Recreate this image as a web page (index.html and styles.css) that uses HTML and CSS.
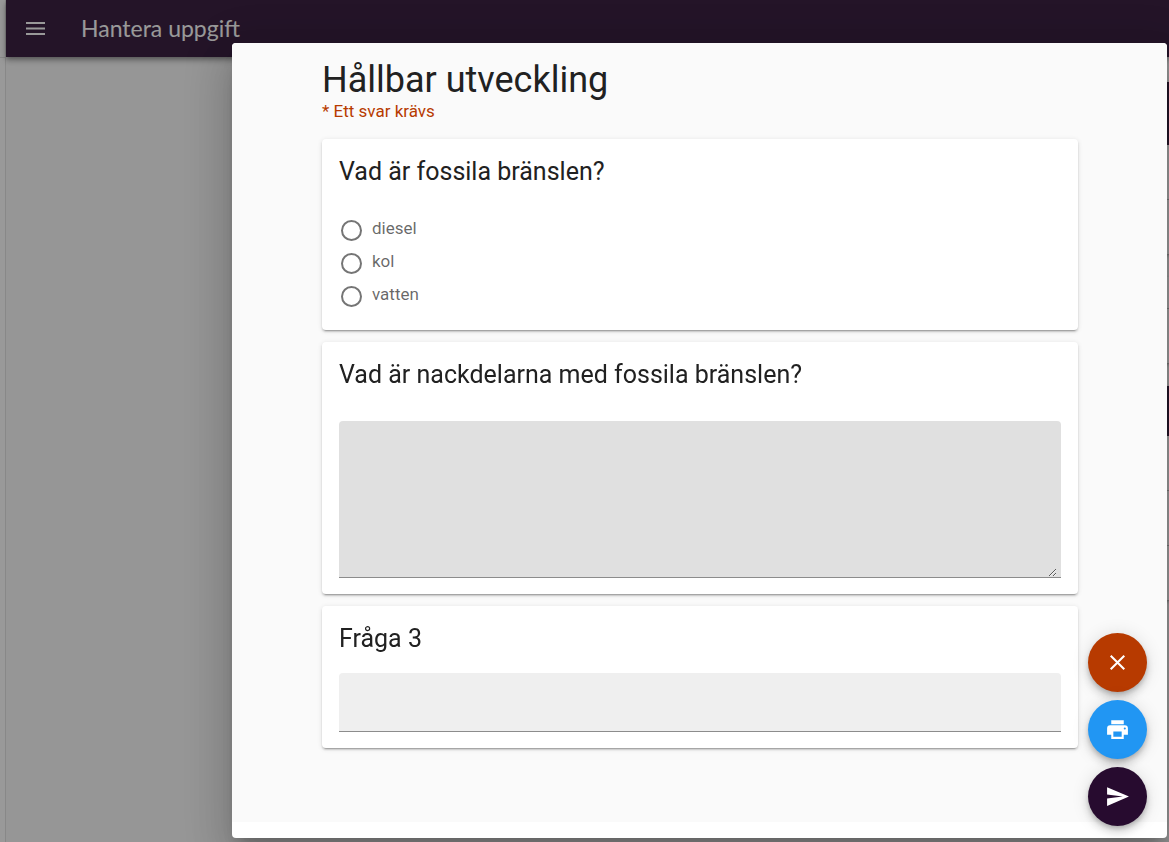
FILE: index.html
```html
<!DOCTYPE html>
<html lang="sv">
	<head>
		<meta charset="utf-8" />
		<title>Hantera uppgift</title>
		<meta name="viewport" content="width=device-width" />
		<link rel="stylesheet" href="styles.css">
	</head>
	<body>

		<div class="app">
			<div class="drawer">
				<div class="drawer-head"></div>
			</div>

			<div class="page">
				<header class="toolbar">
					<button class="menu" type="button" aria-label="Meny">
						<svg viewBox="0 0 20 14" width="20" height="14"><path d="M0 2h19M0 7.5h19M0 13h19" stroke="currentColor" stroke-width="2" /></svg>
					</button>
					<span class="toolbar-title">Hantera uppgift</span>
				</header>

				<main class="panels">
					<div class="panel">
						<div class="panel-head"></div>
						<div class="panel-row"></div>
						<div class="panel-row"></div>
					</div>
					<div class="panel">
						<div class="panel-row short"></div>
						<div class="panel-row"></div>
					</div>
					<div class="panel">
						<div class="panel-head low"></div>
						<div class="panel-row"></div>
						<div class="panel-row"></div>
						<div class="panel-row"></div>
					</div>
				</main>
			</div>
		</div>

		<div class="overlay">
			<div class="dialog" role="dialog" aria-labelledby="form-title">
				<form class="form">
					<h1 class="title" id="form-title">Hållbar utveckling</h1>
					<p class="required">* Ett svar krävs</p>

					<div class="questions">
						<section class="card" role="radiogroup" aria-labelledby="q1">
							<h2 class="question" id="q1">Vad är fossila bränslen?</h2>
							<div class="options">
								<div class="option">
									<input type="radio" name="fuel" id="diesel" />
									<label for="diesel">diesel</label>
								</div>
								<div class="option">
									<input type="radio" name="fuel" id="kol" />
									<label for="kol">kol</label>
								</div>
								<div class="option">
									<input type="radio" name="fuel" id="vatten" />
									<label for="vatten">vatten</label>
								</div>
							</div>
						</section>

						<section class="card">
							<h2 class="question"><label for="q2">Vad är nackdelarna med fossila bränslen?</label></h2>
							<div class="field field-area">
								<textarea id="q2"></textarea>
							</div>
						</section>

						<section class="card">
							<h2 class="question"><label for="q3">Fråga 3</label></h2>
							<div class="field field-line">
								<input type="text" id="q3" />
							</div>
						</section>
					</div>
				</form>
			</div>
		</div>

		<div class="fabs">
			<button class="fab close" type="button" aria-label="Stäng">
				<svg viewBox="0 0 24 24" width="25" height="25"><path d="M5.5 5.5l13 13M18.5 5.5l-13 13" stroke="#fff" stroke-width="2" /></svg>
			</button>
			<button class="fab print" type="button" aria-label="Skriv ut">
				<svg viewBox="0 0 24 24" width="25" height="25"><path fill-rule="evenodd" d="M6 3h12v4H6zM5 8h14a3 3 0 0 1 3 3v6h-4v4H6v-4H2v-6a3 3 0 0 1 3-3zM8 14v5h8v-5zM19 10a1 1 0 1 0 0 2 1 1 0 0 0 0-2z" /></svg>
			</button>
			<button class="fab send" type="button" aria-label="Skicka">
				<svg viewBox="0 0 24 24" width="25" height="25"><path d="M2 21 23 12 2 3v7l15 2-15 2z" /></svg>
			</button>
		</div>

	</body>
</html>
```

FILE: styles.css
```css
* {
	box-sizing: border-box;
	margin: 0;
	padding: 0;
}

html, body {
	height: 100%;
	overflow: hidden;
}

body {
	background: #fafafa;
	color: #212121;
	font-family: Roboto, "Liberation Sans", sans-serif;
	font-size: 17px;
}

button, input, textarea {
	font: inherit;
}

.app {
	display: flex;
	height: 100%;
}

.drawer {
	background: #fff;
	border-right: 1px solid #e0e0e0;
	width: 6px;
}

.drawer-head {
	height: 58px;
	border-bottom: 1px solid #e0e0e0;
}

.page {
	flex: 1;
}

.toolbar {
	display: flex;
	align-items: center;
	gap: 35px;
	height: 57px;
	padding: 0 20px 2px;
	background: #270b2f;
	color: #fff;
	box-shadow: 0 2px 4px -1px rgba(0,0,0,.3), 0 4px 5px rgba(0,0,0,.2), 0 1px 10px rgba(0,0,0,.16);
}

.menu {
	display: flex;
	background: none;
	border: 0;
	color: inherit;
}

.toolbar-title {
	font-family: Lato, sans-serif;
	font-size: 23px;
	line-height: 32px;
}

.panels {
	display: flex;
	flex-direction: column;
	gap: 22px;
	padding-top: 25px;
	margin-left: 50%;
}

.panel {
	background: #fff;
	box-shadow: 0 1px 3px rgba(0,0,0,.3);
}

.panel-head {
	height: 63px;
	background: #270b2f;
}

.panel-head.low {
	height: 50px;
}

.panel-row {
	height: 55px;
	border-bottom: 1px solid #bbb;
}

.panel-row.short {
	height: 32px;
}

.overlay {
	position: fixed;
	inset: 0;
	display: flex;
	padding: 43px 2px 4px 232px;
	background: rgba(33,33,33,.46);
}

.dialog {
	flex: 1;
	padding-bottom: 16px;
	overflow: auto;
	background: #fff;
	border-radius: 4px;
	box-shadow: 0 11px 15px -7px rgba(0,0,0,.2), 0 24px 38px 3px rgba(0,0,0,.14), 0 9px 46px 8px rgba(0,0,0,.12);
}

.form {
	min-height: 100%;
	padding: 16px 89px 72px 90px;
	background: #fafafa;
}

.title {
	font-size: 36px;
	font-weight: 400;
	line-height: 42px;
}

.required {
	color: #b73a00;
	line-height: 20px;
}

.questions {
	display: flex;
	flex-direction: column;
	gap: 12px;
	margin-top: 18px;
}

.card {
	padding: 16px 17px;
	background: #fff;
	border-radius: 4px;
	box-shadow: 0 3px 1px -2px rgba(0,0,0,.2), 0 2px 2px rgba(0,0,0,.14), 0 1px 5px rgba(0,0,0,.12);
}

.question {
	font-size: 25px;
	font-weight: 400;
	line-height: 33px;
}

.options {
	margin: 26px 0 1px;
}

.option {
	display: flex;
	align-items: center;
	gap: 10px;
	height: 33px;
	padding-left: 2px;
	color: rgba(0,0,0,.6);
}

.option label {
	padding-bottom: 5px;
}

.option input {
	appearance: none;
	width: 21px;
	height: 21px;
	border: 2px solid #757575;
	border-radius: 50%;
}

.option input:checked {
	background: #757575;
	box-shadow: inset 0 0 0 3px #fff;
}

.field {
	border-bottom: 1px solid #8c8c8c;
	border-radius: 4px 4px 0 0;
}

.field-area {
	margin-top: 30px;
	padding-right: 4px;
	background: #e0e0e0;
}

.field-line {
	margin-top: 18px;
	background: #efefef;
}

.field input, .field textarea {
	display: block;
	width: 100%;
	padding: 0 12px;
	background: none;
	border: 0;
	outline: none;
}

.field input {
	height: 58px;
}

.field textarea {
	height: 156px;
	padding: 12px;
	resize: vertical;
}

.fabs {
	position: fixed;
	right: 22px;
	bottom: 16px;
	display: flex;
	flex-direction: column;
	gap: 8px;
}

.fab {
	display: flex;
	align-items: center;
	justify-content: center;
	width: 59px;
	height: 59px;
	border: 0;
	border-radius: 50%;
	box-shadow: 0 3px 5px -1px rgba(0,0,0,.2), 0 6px 10px rgba(0,0,0,.14), 0 1px 18px rgba(0,0,0,.12);
	cursor: pointer;
}

.fab svg {
	fill: #fff;
}

.close {
	background: #b73a00;
}

.print {
	background: #2196f3;
}

.send {
	background: #270b2f;
}
```
